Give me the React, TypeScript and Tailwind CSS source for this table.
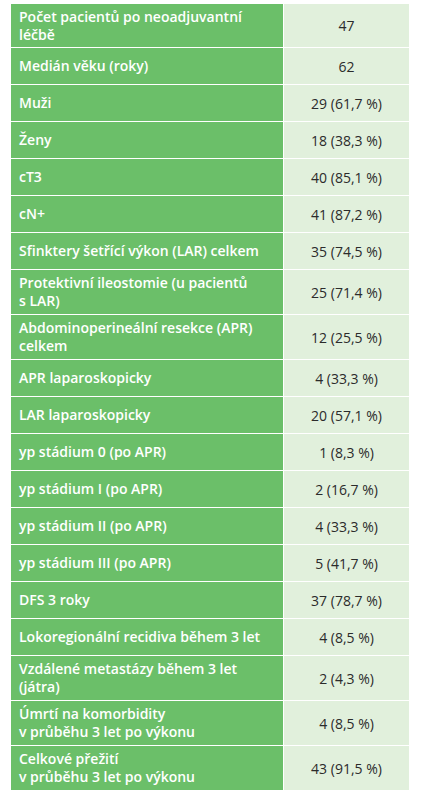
import React from "react";

const rows: [string[], string][] = [
  [["Počet pacientů po neoadjuvantní", "léčbě"], "47"],
  [["Medián věku (roky)"], "62"],
  [["Muži"], "29 (61,7 %)"],
  [["Ženy"], "18 (38,3 %)"],
  [["cT3"], "40 (85,1 %)"],
  [["cN+"], "41 (87,2 %)"],
  [["Sfinktery šetřící výkon (LAR) celkem"], "35 (74,5 %)"],
  [["Protektivní ileostomie (u pacientů", "s LAR)"], "25 (71,4 %)"],
  [["Abdominoperineální resekce (APR)", "celkem"], "12 (25,5 %)"],
  [["APR laparoskopicky"], "4 (33,3 %)"],
  [["LAR laparoskopicky"], "20 (57,1 %)"],
  [["yp stádium 0 (po APR)"], "1 (8,3 %)"],
  [["yp stádium I (po APR)"], "2 (16,7 %)"],
  [["yp stádium II (po APR)"], "4 (33,3 %)"],
  [["yp stádium III (po APR)"], "5 (41,7 %)"],
  [["DFS 3 roky"], "37 (78,7 %)"],
  [["Lokoregionální recidiva během 3 let"], "4 (8,5 %)"],
  [["Vzdálené metastázy během 3 let", "(játra)"], "2 (4,3 %)"],
  [["Úmrtí na komorbidity", "v průběhu 3 let po výkonu"], "4 (8,5 %)"],
  [["Celkové přežití", "v průběhu 3 let po výkonu"], "43 (91,5 %)"],
];

export default function App() {
  return (
    <div
      className="w-[433px] h-[800px] bg-white pt-[4px] pl-[11px]"
      style={{ fontFamily: '"Open Sans", "Noto Sans", sans-serif' }}
    >
      <div className="grid grid-cols-[272px_125px] gap-[1px] w-[398px]">
        {rows.map(([label, value], i) => {
          const h = label.length > 1 ? (i === 0 ? "h-[43px]" : "h-[44px]") : "h-[36px]";
          return (
            <React.Fragment key={i}>
              <div
                className={`${h} bg-[#6bbf69] text-white font-semibold text-[14px] leading-[18px] flex flex-col justify-center pl-[8px]`}
              >
                {label.map((l, j) => (
                  <span key={j} className="whitespace-nowrap">{l}</span>
                ))}
              </div>
              <div
                className={`${h} bg-[#e1f0dc] text-[#2b2b2b] text-[14px] flex items-center justify-center`}
              >
                {value}
              </div>
            </React.Fragment>
          );
        })}
      </div>
    </div>
  );
}
